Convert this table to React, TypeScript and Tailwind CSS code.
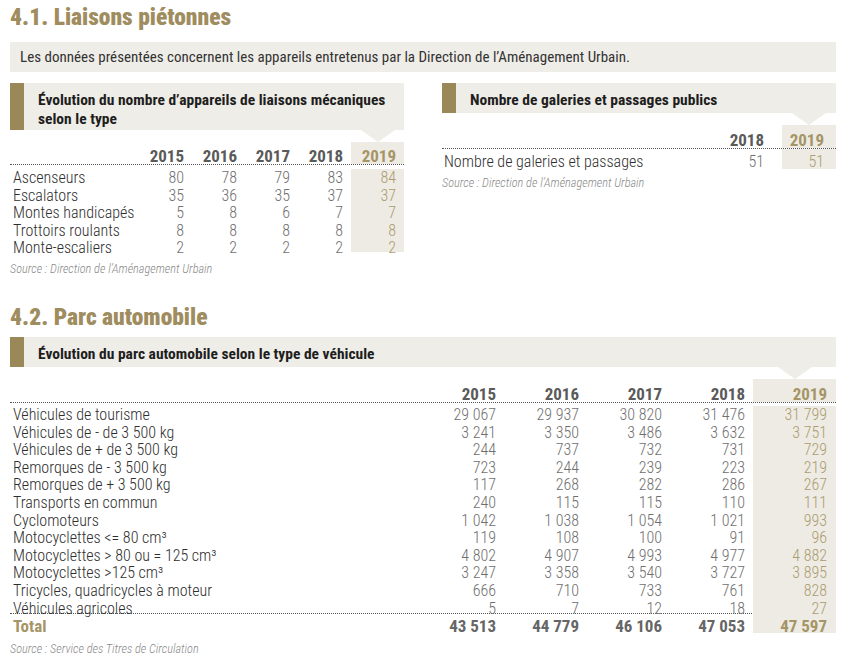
import React from 'react'

const liaisons = [
    ['Ascenseurs', '80', '78', '79', '83', '84'],
    ['Escalators', '35', '36', '35', '37', '37'],
    ['Montes handicapés', '5', '8', '6', '7', '7'],
    ['Trottoirs roulants', '8', '8', '8', '8', '8'],
    ['Monte-escaliers', '2', '2', '2', '2', '2'],
]

const parc = [
    ['Véhicules de tourisme', '29 067', '29 937', '30 820', '31 476', '31 799'],
    ['Véhicules de - de 3 500 kg', '3 241', '3 350', '3 486', '3 632', '3 751'],
    ['Véhicules de + de 3 500 kg', '244', '737', '732', '731', '729'],
    ['Remorques de - 3 500 kg', '723', '244', '239', '223', '219'],
    ['Remorques de + 3 500 kg', '117', '268', '282', '286', '267'],
    ['Transports en commun', '240', '115', '115', '110', '111'],
    ['Cyclomoteurs', '1 042', '1 038', '1 054', '1 021', '993'],
    ['Motocyclettes <= 80 cm³', '119', '108', '100', '91', '96'],
    ['Motocyclettes > 80 ou = 125 cm³', '4 802', '4 907', '4 993', '4 977', '4 882'],
    ['Motocyclettes >125 cm³', '3 247', '3 358', '3 540', '3 727', '3 895'],
    ['Tricycles, quadricycles à moteur', '666', '710', '733', '761', '828'],
    ['Véhicules agricoles', '5', '7', '12', '18', '27'],
]

const years = ['2015', '2016', '2017', '2018']

function Banner({ children, className = '', textClass = 'self-center pt-[4px]' }: { children: React.ReactNode; className?: string; textClass?: string }) {
    return (
        <div className={`flex bg-[#efede7] ${className}`}>
            <div className="w-[14px] shrink-0 bg-[#9a8858]" />
            <div className={`pl-[14px] text-[15.5px] font-bold leading-[19px] text-[#1e1e1e] ${textClass}`}>
                {children}
            </div>
        </div>
    )
}

function Notch({ col }: { col: string }) {
    return (
        <div className="flex justify-end">
            <div className={`flex justify-center ${col}`}>
                <div className="h-0 w-0 border-l-[17px] border-r-[17px] border-t-[12px] border-l-transparent border-r-transparent border-t-[#efede7]" />
            </div>
        </div>
    )
}

function Source({ children }: { children: React.ReactNode }) {
    return <div className="text-[12.3px] font-light italic leading-[16px] text-[#8a8a8a]">{children}</div>
}

export default function App() {
    return (
        <div className="w-[848px] h-[668px] bg-white pl-[10px] pr-[12px] font-['Roboto_Condensed','Roboto',sans-serif] font-stretch-condensed overflow-hidden">
            <h1 className="pt-[4px] text-[23.5px] font-black leading-[26px] text-[#9f8d5f]">4.1. Liaisons piétonnes</h1>

            <div className="mt-[12px] flex h-[30px] items-center bg-[#efede7] pl-[10px] text-[15px] text-[#333]">
                Les données présentées concernent les appareils entretenus par la Direction de l’Aménagement Urbain.
            </div>

            <div className="mt-[11px] flex justify-between items-start">
                {/* liaisons mécaniques */}
                <div className="w-[394px]">
                    <Banner className="h-[47px]" textClass="self-start pt-[8px]">
                        Évolution du nombre d’appareils de liaisons mécaniques
                        <br />
                        selon le type
                    </Banner>
                    <Notch col="w-[53px]" />
                    <div className="flex h-[23px] items-end border-b border-dotted border-[#555] text-[17px] font-bold leading-[16px] text-[#5a5a5a]">
                        <div className="flex-1" />
                        {years.map(y => (
                            <div key={y} className="w-[53px] pr-[8px] text-right">{y}</div>
                        ))}
                        <div className="flex h-full w-[53px] items-end justify-end bg-[#eeebe4] pr-[8px] text-[#a59567]">2019</div>
                    </div>
                    <div className="h-[87px] text-[16px] font-light leading-[17.6px]">
                        {liaisons.map(([label, ...vals], i) => (
                            <div key={label} className={`flex ${i === 0 ? 'pt-[4px]' : ''} ${i === 4 ? 'h-[13px]' : ''}`}>
                                <div className="flex-1 pl-[3px] text-[#2e2e2e]">{label}</div>
                                {vals.slice(0, 4).map((v, j) => (
                                    <div key={j} className="w-[53px] pr-[8px] text-right text-[#6f6f6f]">{v}</div>
                                ))}
                                <div className="w-[53px] bg-[#eeebe4] pr-[8px] text-right text-[#ab9c70]">{vals[4]}</div>
                            </div>
                        ))}
                    </div>
                    <div className="mt-[9px]">
                        <Source>Source : Direction de l’Aménagement Urbain</Source>
                    </div>
                </div>

                {/* galeries */}
                <div className="w-[394px]">
                    <Banner className="h-[30px]">Nombre de galeries et passages publics</Banner>
                    <Notch col="w-[54px]" />
                    <div className="flex h-[24px] items-end border-b border-dotted border-[#555] text-[17px] font-bold leading-[16px] text-[#5a5a5a]">
                        <div className="flex-1" />
                        <div className="w-[54px] pr-[18px] text-right">2018</div>
                        <div className="flex h-full w-[54px] items-end justify-end bg-[#eeebe4] pr-[12px] text-[#a59567]">2019</div>
                    </div>
                    <div className="flex h-[20px] text-[16px] font-light leading-[17px]">
                        <div className="flex-1 pl-[2px] pt-[4px] text-[#2e2e2e]">Nombre de galeries et passages</div>
                        <div className="w-[54px] pr-[18px] pt-[4px] text-right text-[#6f6f6f]">51</div>
                        <div className="w-[54px] bg-[#eeebe4] pr-[12px] pt-[4px] text-right text-[#ab9c70]">51</div>
                    </div>
                    <div className="mt-[6px]">
                        <Source>Source : Direction de l’Aménagement Urbain</Source>
                    </div>
                </div>
            </div>

            <h1 className="mt-[27px] text-[23.5px] font-black leading-[26px] text-[#9f8d5f]">4.2. Parc automobile</h1>

            <div className="mt-[7px]">
                <Banner className="h-[30px]">Évolution du parc automobile selon le type de véhicule</Banner>
                <Notch col="w-[83px]" />
                <div className="flex h-[24px] items-end border-b border-dotted border-[#555] text-[17px] font-bold leading-[16px] text-[#5a5a5a]">
                    <div className="flex-1" />
                    {years.map(y => (
                        <div key={y} className="w-[83px] pr-[8px] text-right">{y}</div>
                    ))}
                    <div className="flex h-full w-[83px] items-end justify-end bg-[#eeebe4] pr-[9px] text-[#a59567]">2019</div>
                </div>
                <div className="h-[211px] border-b border-dotted border-[#555] text-[16px] font-light leading-[17.6px]">
                    {parc.map(([label, ...vals], i) => (
                        <div key={label} className={`flex ${i === 0 ? 'pt-[3px]' : ''} ${i === 11 ? 'h-[14px]' : ''}`}>
                            <div className="flex-1 pl-[3px] text-[#2e2e2e]">{label}</div>
                            {vals.slice(0, 4).map((v, j) => (
                                <div key={j} className="w-[83px] pr-[8px] text-right text-[#6f6f6f]">{v}</div>
                            ))}
                            <div className="w-[83px] bg-[#eeebe4] pr-[9px] text-right text-[#ab9c70]">{vals[4]}</div>
                        </div>
                    ))}
                </div>
                <div className="flex h-[19px] text-[17px] font-bold leading-[14px] text-[#666]">
                    <div className="flex-1 pl-[3px] pt-[5px] text-[#a59567]">Total</div>
                    {['43 513', '44 779', '46 106', '47 053'].map(v => (
                        <div key={v} className="w-[83px] pr-[8px] pt-[5px] text-right">{v}</div>
                    ))}
                    <div className="w-[83px] bg-[#eeebe4] pr-[9px] pt-[5px] text-right text-[#a59567]">47 597</div>
                </div>
                <div className="mt-[8px]">
                    <Source>Source : Service des Titres de Circulation</Source>
                </div>
            </div>
        </div>
    )
}
